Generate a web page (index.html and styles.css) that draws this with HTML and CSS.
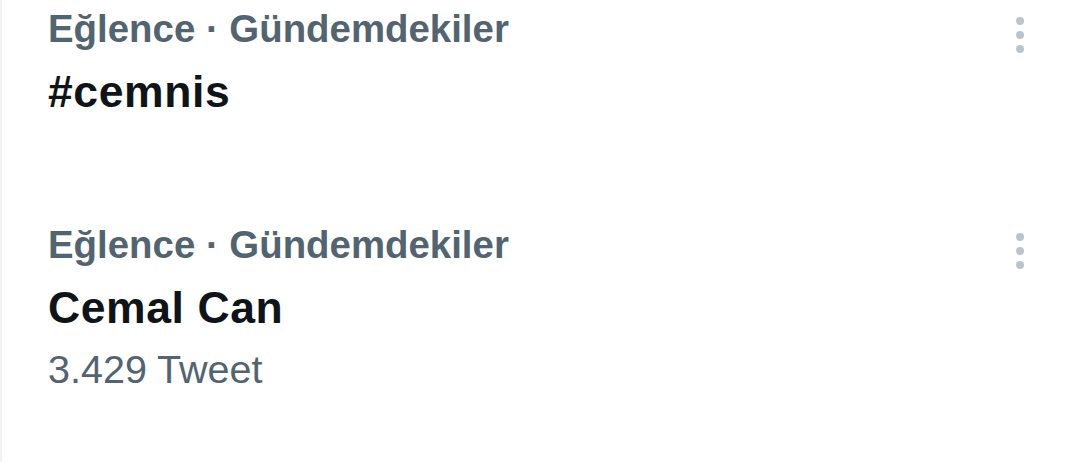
FILE: index.html
```html
<!DOCTYPE html>
<html lang="tr">
<head>
  <meta charset="UTF-8">
  <title>Gündemdekiler</title>
  <link rel="stylesheet" href="styles.css">
</head>
<body>

  <div class="trends">
    <div class="trend">
      <div class="trend-text">
        <div class="trend-meta">Eğlence · Gündemdekiler</div>
        <div class="trend-name">#cemnis</div>
      </div>
      <svg class="more" width="20" height="44" viewBox="0 0 20 44">
        <circle cx="10" cy="8" r="4"/>
        <circle cx="10" cy="22" r="4"/>
        <circle cx="10" cy="36" r="4"/>
      </svg>
    </div>

    <div class="trend">
      <div class="trend-text">
        <div class="trend-meta">Eğlence · Gündemdekiler</div>
        <div class="trend-name">Cemal Can</div>
        <div class="trend-count">3.429 Tweet</div>
      </div>
      <svg class="more" width="20" height="44" viewBox="0 0 20 44">
        <circle cx="10" cy="8" r="4"/>
        <circle cx="10" cy="22" r="4"/>
        <circle cx="10" cy="36" r="4"/>
      </svg>
    </div>
  </div>

</body>
</html>
```

FILE: styles.css
```css
body {
  margin: 0;
  background: #ffffff;
  font-family: "Liberation Sans", Arial, sans-serif;
  overflow: hidden;
}

.trends {
  height: 462px;
  border-left: 2px solid #eff3f4;
}

.trend {
  display: flex;
  justify-content: space-between;
  align-items: flex-start;
  padding: 5px 50px 95px 46px;
}

.trend-meta {
  font-size: 38.4px;
  font-weight: bold;
  line-height: 47px;
  color: #536471;
}

.trend-name {
  margin-top: 11px;
  font-size: 44.5px;
  font-weight: bold;
  letter-spacing: 0.6px;
  line-height: 58px;
  color: #0f1419;
}

.trend-count {
  margin-top: 9px;
  font-size: 39.5px;
  line-height: 47px;
  color: #536471;
}

.more {
  margin-top: 8px;
  fill: #b9c5cd;
}
```
